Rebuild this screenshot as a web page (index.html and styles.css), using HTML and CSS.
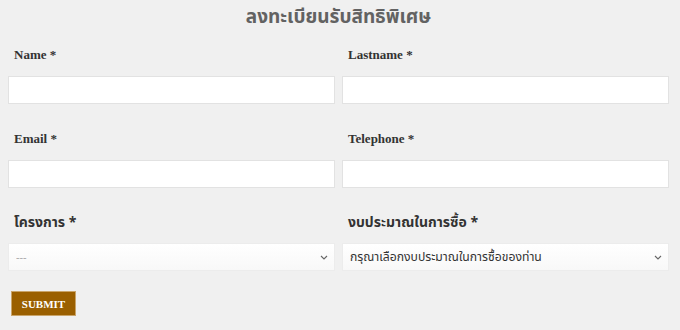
FILE: index.html
```html
<!DOCTYPE html>
<html lang="th">
<head>
<meta charset="utf-8">
<title>ลงทะเบียนรับสิทธิพิเศษ</title>
<link rel="stylesheet" href="styles.css">
</head>
<body>
<form class="form">
  <h2 class="title">ลงทะเบียนรับสิทธิพิเศษ</h2>
  <div class="grid">
    <div class="field">
      <label class="label">Name *</label>
      <input class="input" type="text">
    </div>
    <div class="field">
      <label class="label">Lastname *</label>
      <input class="input" type="text">
    </div>
    <div class="field">
      <label class="label">Email *</label>
      <input class="input" type="text">
    </div>
    <div class="field">
      <label class="label">Telephone *</label>
      <input class="input" type="text">
    </div>
    <div class="field last">
      <label class="label thai">โครงการ *</label>
      <div class="select-wrap">
        <select class="select muted"><option>---</option></select>
        <svg class="chev" width="8" height="5" viewBox="0 0 8 5"><path d="M1 1 L4 4 L7 1" fill="none" stroke="#666" stroke-width="1.1"/></svg>
      </div>
    </div>
    <div class="field last">
      <label class="label thai">งบประมาณในการซื้อ *</label>
      <div class="select-wrap">
        <select class="select"><option>กรุณาเลือกงบประมาณในการซื้อของท่าน</option></select>
        <svg class="chev" width="8" height="5" viewBox="0 0 8 5"><path d="M1 1 L4 4 L7 1" fill="none" stroke="#666" stroke-width="1.1"/></svg>
      </div>
    </div>
  </div>
  <div class="actions">
    <button class="submit" type="button">SUBMIT</button>
  </div>
</form>
</body>
</html>
```

FILE: styles.css
```css
html, body {
  margin: 0;
  padding: 0;
  background: #f0f0f0;
}
body {
  font-family: "Liberation Serif", "Noto Sans Thai", "Noto Serif Thai", Tahoma, serif;
}
.form {
  width: 661px;
  padding: 7px 0 0 8px;
}
.title {
  margin: 0 0 18px;
  text-align: center;
  font-family: "Liberation Sans", "Noto Sans Thai", Tahoma, sans-serif;
  font-size: 19px;
  line-height: 20px;
  font-weight: bold;
  color: #626262;
}
.grid {
  display: grid;
  grid-template-columns: 327px 327px;
  column-gap: 7px;
}
.field {
  display: flex;
  flex-direction: column;
  margin-bottom: 25px;
}
.field.last {
  margin-bottom: 20px;
}
.label {
  display: block;
  padding-left: 6px;
  font-size: 13px;
  line-height: 20px;
  font-weight: bold;
  color: #333;
  margin-bottom: 11px;
}
.label.thai {
  font-family: "Noto Sans Thai", Tahoma, "Liberation Sans", sans-serif;
  font-size: 14px;
  margin-bottom: 10px;
}
.input {
  display: block;
  box-sizing: border-box;
  height: 28px;
  margin: 0;
  border: 1px solid #e2e2e2;
  background: #fff;
  outline: none;
}
.select-wrap {
  position: relative;
  height: 28px;
}
.select {
  display: block;
  box-sizing: border-box;
  width: 100%;
  height: 28px;
  margin: 0;
  padding: 0 24px 0 7px;
  border: 1px solid #ececec;
  border-radius: 0;
  background: linear-gradient(#ffffff, #f8f8f8);
  -webkit-appearance: none;
  appearance: none;
  font-family: "Noto Sans Thai", Tahoma, "Liberation Sans", sans-serif;
  font-size: 12.2px;
  color: #333;
}
.select.muted {
  color: #aaa;
  font-size: 11px;
}
.chev {
  position: absolute;
  right: 7px;
  top: 12px;
  pointer-events: none;
}
.actions {
  padding-left: 3px;
}
.submit {
  display: block;
  box-sizing: border-box;
  width: 65px;
  height: 25px;
  margin: 0;
  padding: 0;
  border: 1px solid #c9a46a;
  background: #9a5f00;
  color: #fff;
  font-family: "Liberation Serif", serif;
  font-size: 11px;
  font-weight: bold;
  cursor: pointer;
}
```
